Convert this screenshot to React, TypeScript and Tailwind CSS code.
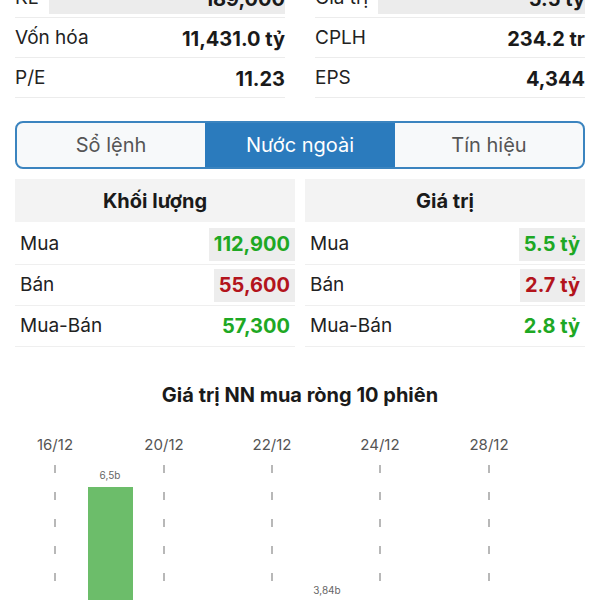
import React from "react";

const font = { fontFamily: "Inter, 'Noto Sans', 'Liberation Sans', sans-serif" };

function InfoRow({ label, value }: { label: string; value: string }) {
  return (
    <div className="flex h-[40px] items-center justify-between border-b border-[#ececec] pt-[2px]">
      <span className="text-[19px] text-[#222]">{label}</span>
      <span className="text-[20px] font-bold text-[#1a1a1a]">{value}</span>
    </div>
  );
}

function TradeRow({ label, value, color, hl }: { label: string; value: string; color: string; hl?: boolean }) {
  return (
    <div className="flex h-[41px] items-center justify-between border-b border-[#efefef] pl-[5px]">
      <span className="text-[19px] text-[#222]">{label}</span>
      <span className={`flex h-[33px] items-center px-[5px] text-[20px] font-bold ${color} ${hl ? "bg-[#ededed]" : ""}`}>{value}</span>
    </div>
  );
}

export default function App() {
  const xs = [55, 164, 272, 380, 489];
  const labels = ["16/12", "20/12", "22/12", "24/12", "28/12"];
  return (
    <div className="h-[600px] w-[600px] overflow-hidden bg-white" style={font}>
      <div className="-mt-[22px] grid grid-cols-2 gap-x-[30px] px-[15px]">
        <div>
          <div className="flex h-[40px] items-center justify-between border-b border-[#ececec] pt-[2px]">
            <span className="text-[19px] text-[#222]">KL</span>
            <span className="ml-[10px] flex flex-1 justify-end bg-[#ececec] text-[20px] font-bold text-[#1a1a1a]">189,000</span>
          </div>
          <InfoRow label="Vốn hóa" value="11,431.0 tỷ" />
          <InfoRow label="P/E" value="11.23" />
        </div>
        <div>
          <div className="flex h-[40px] items-center justify-between border-b border-[#ececec] pt-[2px]">
            <span className="text-[19px] text-[#222]">Giá trị</span>
            <span className="ml-[10px] flex flex-1 justify-end bg-[#ececec] text-[20px] font-bold text-[#1a1a1a]">5.5 tỷ</span>
          </div>
          <InfoRow label="CPLH" value="234.2 tr" />
          <InfoRow label="EPS" value="4,344" />
        </div>
      </div>

      <div className="mx-[15px] mt-[23px] flex h-[48px] overflow-hidden rounded-[8px] border-2 border-[#3b84bf] bg-[#f7f9fa]">
        <div className="flex flex-1 items-center justify-center text-[20px] text-[#555]">Sổ lệnh</div>
        <div className="flex w-[190px] items-center justify-center bg-[#2b7bbd] text-[20px] text-white">Nước ngoài</div>
        <div className="flex flex-1 items-center justify-center text-[20px] text-[#555]">Tín hiệu</div>
      </div>

      <div className="mt-[10px] grid grid-cols-2 gap-x-[10px] px-[15px]">
        <div>
          <div className="flex h-[43px] items-center justify-center bg-[#f3f3f3] text-[20px] font-bold text-[#1a1a1a]">Khối lượng</div>
          <div className="h-[2px]" />
          <TradeRow label="Mua" value="112,900" color="text-[#1ea824]" hl />
          <TradeRow label="Bán" value="55,600" color="text-[#b3141c]" hl />
          <TradeRow label="Mua-Bán" value="57,300" color="text-[#1ea824]" />
        </div>
        <div>
          <div className="flex h-[43px] items-center justify-center bg-[#f3f3f3] text-[20px] font-bold text-[#1a1a1a]">Giá trị</div>
          <div className="h-[2px]" />
          <TradeRow label="Mua" value="5.5 tỷ" color="text-[#1ea824]" hl />
          <TradeRow label="Bán" value="2.7 tỷ" color="text-[#b3141c]" hl />
          <TradeRow label="Mua-Bán" value="2.8 tỷ" color="text-[#1ea824]" />
        </div>
      </div>

      <div className="mt-[33px] text-center text-[20px] font-bold text-[#1a1a1a]">Giá trị NN mua ròng 10 phiên</div>

      <svg width="600" height="200" className="mt-[20px] block">
        {xs.map((x, i) => (
          <g key={i}>
            <text x={x} y={20} textAnchor="middle" fontSize="15" fill="#555" style={font}>{labels[i]}</text>
            <line x1={x} y1={35} x2={x} y2={200} stroke="#b8b8b8" strokeWidth="2" strokeDasharray="8 19" />
          </g>
        ))}
        <rect x="88" y="57" width="45" height="143" fill="#6cbd6a" />
        <text x="110" y="49" textAnchor="middle" fontSize="10" fill="#666" style={font}>6,5b</text>
        <text x="327" y="164" textAnchor="middle" fontSize="10" fill="#666" style={font}>3,84b</text>
      </svg>
    </div>
  );
}
